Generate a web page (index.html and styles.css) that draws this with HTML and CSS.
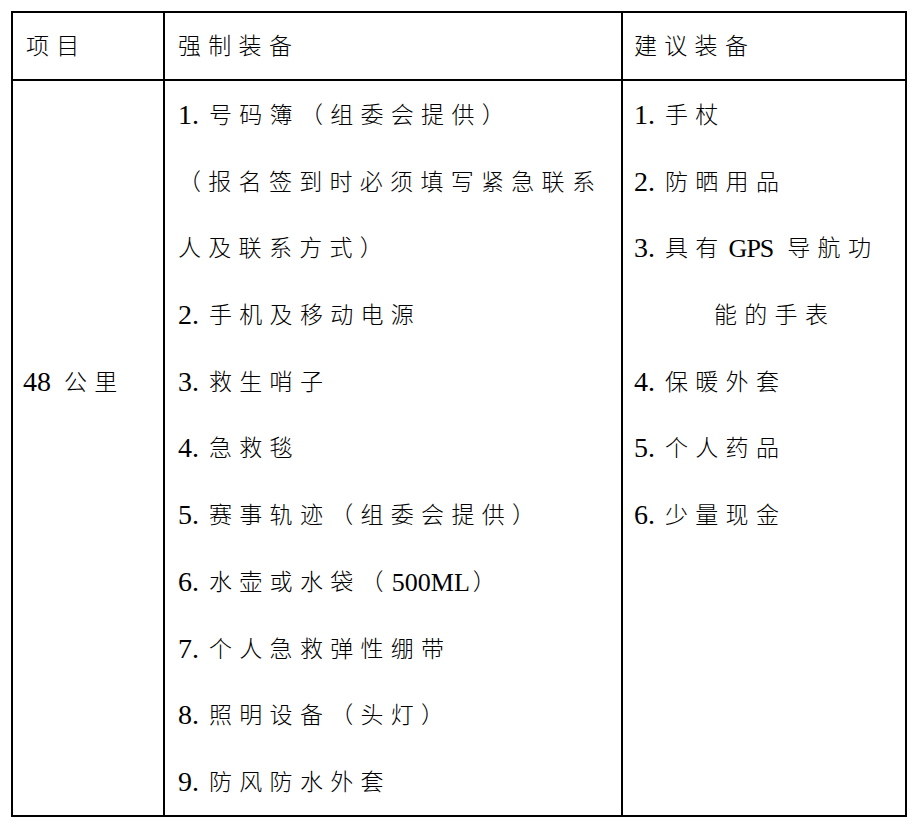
FILE: index.html
```html
<!DOCTYPE html>
<html lang="zh-CN">
<head>
<meta charset="utf-8">
<title>装备清单</title>
<link rel="stylesheet" href="styles.css">
</head>
<body>
<table class="gear">
  <colgroup>
    <col class="c1">
    <col class="c2">
    <col class="c3">
  </colgroup>
  <thead>
    <tr>
      <th class="cell cell-a">项目</th>
      <th class="cell cell-b">强制装备</th>
      <th class="cell cell-c">建议装备</th>
    </tr>
  </thead>
  <tbody>
    <tr>
      <td class="cell cell-a">
        <div class="line"></div>
        <div class="line"></div>
        <div class="line"></div>
        <div class="line"></div>
        <div class="line"><span class="n n-km">48</span>公里</div>
      </td>
      <td class="cell cell-b">
        <div class="line"><span class="n n-item">1.</span>号码簿（组委会提供）</div>
        <div class="line">（报名签到时必须填写紧急联系</div>
        <div class="line">人及联系方式）</div>
        <div class="line"><span class="n n-item">2.</span>手机及移动电源</div>
        <div class="line"><span class="n n-item">3.</span>救生哨子</div>
        <div class="line"><span class="n n-item">4.</span>急救毯</div>
        <div class="line"><span class="n n-item">5.</span>赛事轨迹（组委会提供）</div>
        <div class="line"><span class="n n-item">6.</span>水壶或水袋（<span class="n n-caps">500ML</span>）</div>
        <div class="line"><span class="n n-item">7.</span>个人急救弹性绷带</div>
        <div class="line"><span class="n n-item">8.</span>照明设备（头灯）</div>
        <div class="line"><span class="n n-item">9.</span>防风防水外套</div>
      </td>
      <td class="cell cell-c">
        <div class="line"><span class="n n-item">1.</span>手杖</div>
        <div class="line"><span class="n n-item">2.</span>防晒用品</div>
        <div class="line"><span class="n n-item">3.</span>具有<span class="n n-caps n-gps">GPS</span>导航功</div>
        <div class="line indent">能的手表</div>
        <div class="line"><span class="n n-item">4.</span>保暖外套</div>
        <div class="line"><span class="n n-item">5.</span>个人药品</div>
        <div class="line"><span class="n n-item">6.</span>少量现金</div>
      </td>
    </tr>
  </tbody>
</table>
</body>
</html>
```

FILE: styles.css
```css
html, body {
  margin: 0;
  padding: 0;
  background: #ffffff;
}

body {
  padding: 11px;
  font-family: "Noto Sans CJK SC", "Liberation Serif", sans-serif;
  font-size: 23px;
  font-weight: 300;
  color: #000000;
}

.gear {
  border-collapse: separate;
  border-spacing: 0;
  table-layout: fixed;
  width: 896px;
  border-top: 2px solid #000;
  border-left: 2px solid #000;
}

.c1 { width: 152px; }
.c2 { width: 458px; }
.c3 { width: 284px; }

.cell {
  border-right: 2px solid #000;
  border-bottom: 2px solid #000;
  text-align: left;
  font-weight: 300;
  vertical-align: top;
  letter-spacing: 7.3px;
  white-space: nowrap;
  padding: 0;
}

thead .cell {
  height: 63px;
  line-height: 63px;
  padding-bottom: 3px;
  vertical-align: middle;
}

.cell-a { padding-left: 13px; }
.cell-b { padding-left: 13px; }
.cell-c { padding-left: 11px; }

.line {
  height: 65.2px;
  line-height: 65.2px;
  padding-bottom: 1.5px;
}

.n {
  font-family: "Liberation Serif", serif;
  font-size: 28px;
  font-weight: 400;
  letter-spacing: 0;
  vertical-align: -1px;
}

.n-item {
  margin-right: 10px;
}

.n-km {
  margin-left: -3px;
  margin-right: 13px;
}

.n-caps {
  font-size: 26px;
  margin-left: 1px;
  margin-right: 3px;
}

.n-gps {
  letter-spacing: -1px;
  margin-left: 3px;
  margin-right: 14px;
}

.indent {
  padding-left: 80px;
}
```
